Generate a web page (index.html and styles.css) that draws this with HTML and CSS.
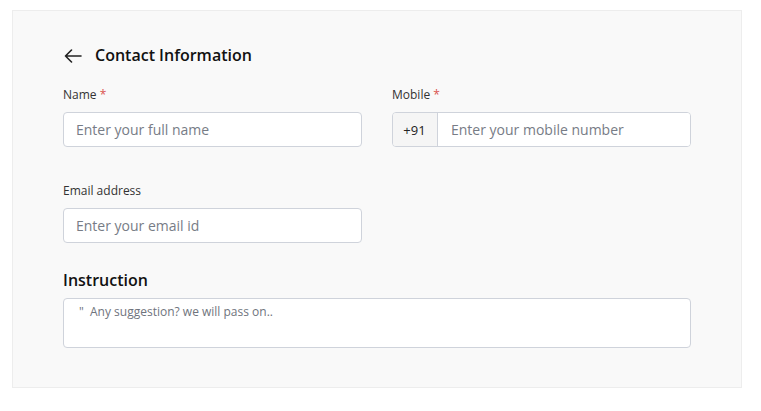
FILE: index.html
```html
<!DOCTYPE html>
<html>
<head>
<meta charset="utf-8">
<link rel="stylesheet" href="styles.css">
</head>
<body>
<div class="page">
  <div class="panel">
    <div class="header">
      <svg class="back" width="18" height="14" viewBox="0 0 18 14"><path d="M17 7H1.5M7.5 1L1.5 7L7.5 13" fill="none" stroke="#222" stroke-width="1.6" stroke-linecap="round" stroke-linejoin="round"/></svg>
      <h1 class="title">Contact Information</h1>
    </div>
    <div class="grid">
      <div class="field">
        <label class="label">Name <span class="req">*</span></label>
        <input class="input" type="text" placeholder="Enter your full name">
      </div>
      <div class="field">
        <label class="label">Mobile <span class="req">*</span></label>
        <div class="phone">
          <span class="prefix">+91</span>
          <input class="input phone-input" type="text" placeholder="Enter your mobile number">
        </div>
      </div>
      <div class="field field-email">
        <label class="label">Email address</label>
        <input class="input" type="text" placeholder="Enter your email id">
      </div>
    </div>
    <h2 class="subtitle">Instruction</h2>
    <textarea class="textarea" placeholder="&quot;  Any suggestion? we will pass on.."></textarea>
  </div>
</div>
</body>
</html>
```

FILE: styles.css
```css
* { box-sizing: border-box; }
html, body { margin: 0; padding: 0; background: #fff; }
body { font-family: "Open Sans", "Noto Sans", sans-serif; color: #222; }
.page { padding: 10px 19px 0 12px; }
.panel {
  width: 730px;
  height: 378px;
  background: #f9f9f9;
  border: 1px solid #ededed;
  padding: 33px 50px 0 50px;
}
.header { display: flex; align-items: center; gap: 13px; height: 22px; }
.back { display: block; margin-left: 1px; margin-top: 2px; }
.title { margin: 0; font-size: 16px; font-weight: 600; line-height: 22px; color: #111; }
.grid {
  display: grid;
  grid-template-columns: 299px 299px;
  column-gap: 30px;
  row-gap: 36px;
  margin-top: 21px;
}
.field { display: flex; flex-direction: column; }
.label { font-size: 12px; line-height: 16px; color: #333; margin-bottom: 9px; }
.req { color: #d9534f; }
.input {
  height: 35px;
  width: 100%;
  border: 1px solid #cfd3db;
  border-radius: 4px;
  background: #fff;
  padding: 0 12px;
  font-family: inherit;
  font-size: 14px;
  color: #333;
  outline: none;
}
.input::placeholder { color: #777c86; opacity: 1; }
.phone {
  display: flex;
  height: 35px;
  border: 1px solid #cfd3db;
  border-radius: 4px;
  background: #fff;
  overflow: hidden;
}
.prefix {
  width: 45px;
  flex: none;
  background: #f5f5f5;
  border-right: 1px solid #cfd3db;
  font-size: 13px;
  color: #222;
  display: flex;
  align-items: center;
  justify-content: center;
  padding-right: 1px;
}
.phone-input { border: none; border-radius: 0; height: 33px; padding-left: 13px; flex: 1; }
.subtitle { margin: 26px 0 7px; font-size: 16px; font-weight: 600; line-height: 22px; color: #111; }
.textarea {
  display: block;
  width: 628px;
  height: 50px;
  border: 1px solid #cfd3db;
  border-radius: 4px;
  background: #fff;
  padding: 5px 15px;
  font-family: inherit;
  font-size: 12px;
  line-height: 16px;
  resize: none;
  outline: none;
}
.textarea::placeholder { color: #6f747d; opacity: 1; }
```
